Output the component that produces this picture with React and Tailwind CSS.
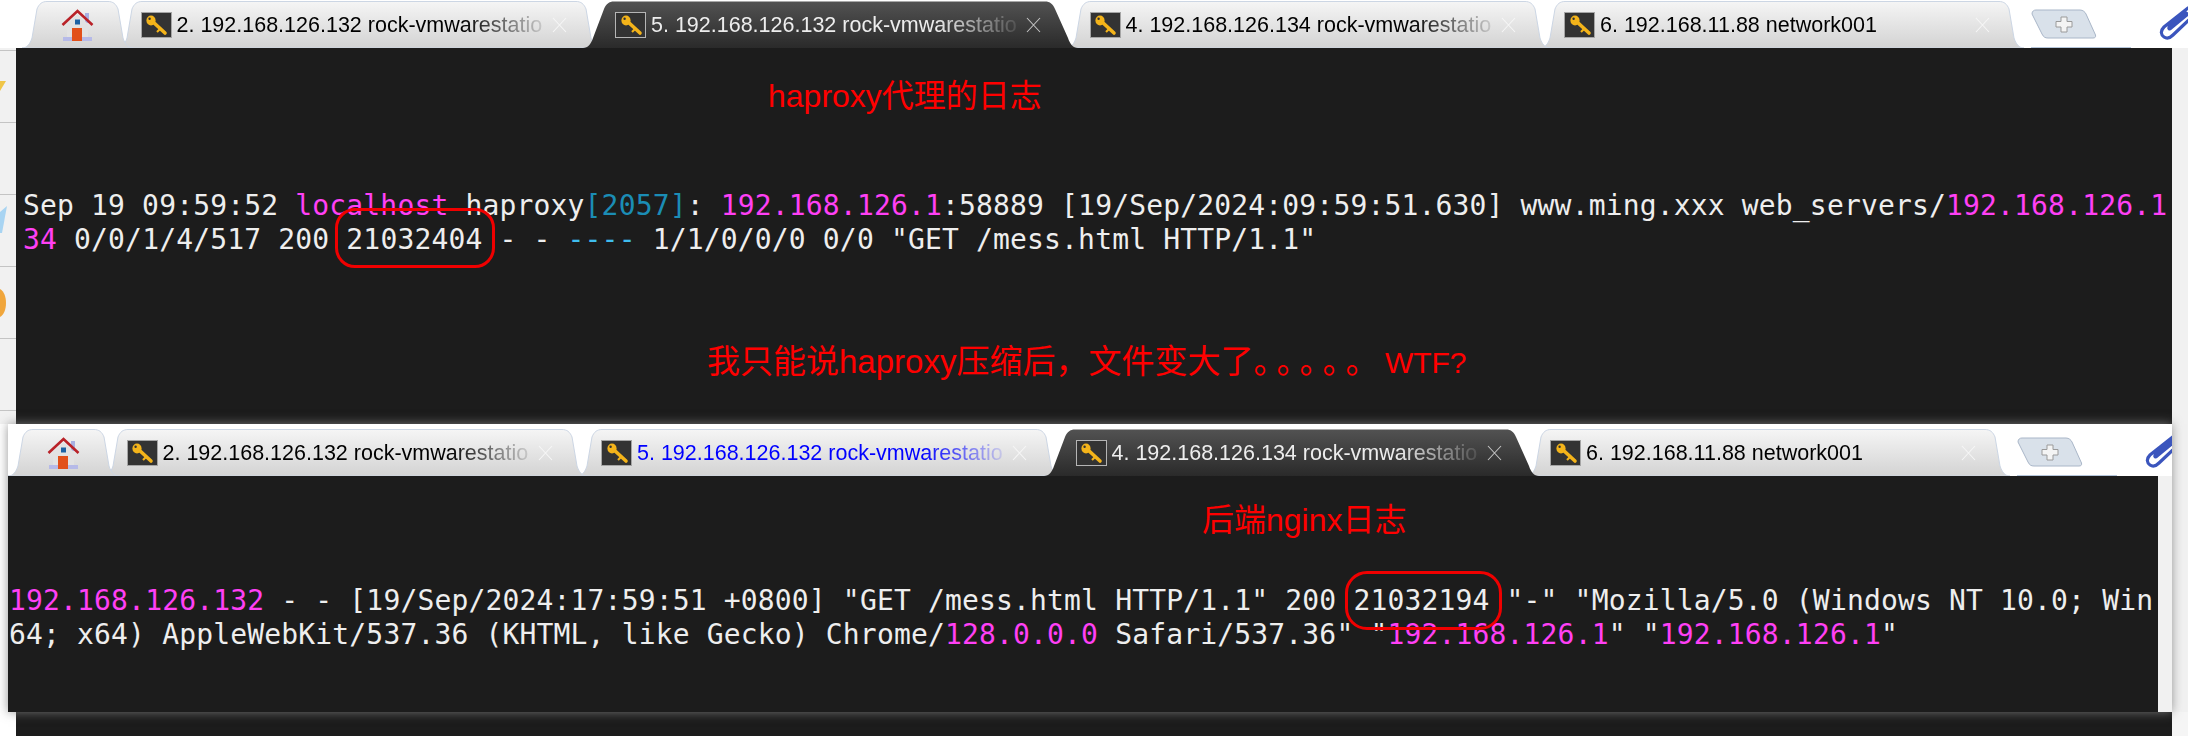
import React from "react";

const M = ({ children }) => <span className="text-[#ff40f5]">{children}</span>;

function tabPath(W, H, inL, inR) {
  return `M0 ${H} C5 ${H} 8 ${H - 4} 10 ${H - 10} L${inL - 3} 8 C${inL - 1} 3 ${inL + 2} 0.5 ${inL + 7} 0.5 L${W - inR - 7} 0.5 C${W - inR - 2} 0.5 ${W - inR + 1} 3 ${W - inR + 3} 8 L${W - 10} ${H - 10} C${W - 8} ${H - 4} ${W - 5} ${H} ${W} ${H} Z`;
}

function TabShape({ W, dark, extraL = 0, extraR = 0 }) {
  const full = W + extraL + extraR;
  return (
    <svg
      width={full}
      height={47}
      viewBox={`0 0 ${full} 47`}
      className="absolute top-0"
      style={{ left: -extraL }}
    >
      <defs>
        <linearGradient id="tab-light" x1="0" y1="0" x2="0" y2="1">
          <stop offset="0" stopColor="#f5f5f5" />
          <stop offset="1" stopColor="#d3d3d3" />
        </linearGradient>
        <linearGradient id="tab-dark" x1="0" y1="0" x2="0" y2="1">
          <stop offset="0" stopColor="#525252" />
          <stop offset="1" stopColor="#2a2a2a" />
        </linearGradient>
      </defs>
      <path
        d={tabPath(full, 47, dark ? 24 : 18, dark ? 26 : 18)}
        fill={dark ? "url(#tab-dark)" : "url(#tab-light)"}
        stroke={dark ? "none" : "#ccd6e4"}
        strokeWidth="1"
      />
    </svg>
  );
}

function KeyIcon({ dark }) {
  return (
    <div
      className={`w-[31px] h-[26px] shrink-0 bg-[#333333] border ${dark ? "border-[#b5b5b5]" : "border-[#a5a5a5]"} flex items-center justify-center`}
    >
      <svg width="24" height="22" viewBox="0 0 24 22">
        <line x1="8" y1="7" x2="21" y2="19" stroke="#f4b41a" strokeWidth="3.6" strokeLinecap="round" />
        <line x1="16" y1="15" x2="13" y2="18" stroke="#f4b41a" strokeWidth="2.2" />
        <ellipse cx="7" cy="6.5" rx="4.6" ry="5" fill="#f4b41a" />
        <circle cx="5.6" cy="4.8" r="1.2" fill="#333333" />
      </svg>
    </div>
  );
}

function CloseX({ dark }) {
  return (
    <svg width="15" height="16" viewBox="0 0 15 16" className="shrink-0 ml-[10px]">
      <path d="M1 1 L14 15 M14 1 L1 15" stroke={dark ? "#c4c4c4" : "#f6f6f6"} strokeWidth="1.1" fill="none" />
    </svg>
  );
}

function Tab({ label, dark, blue, z }) {
  const color = dark ? "text-[#ededed]" : blue ? "text-[#0000ff]" : "text-black";
  return (
    <div className={`relative w-[484px] h-[47px] shrink-0 -ml-[9.5px] ${z}`}>
      <TabShape W={484} dark={dark} extraL={dark ? 8 : 0} extraR={dark ? 3 : 0} />
      <div className="relative flex items-center h-full pl-[24px] pt-[1px]">
        <KeyIcon dark={dark} />
        <div
          className={`ml-[5px] w-[365px] overflow-hidden whitespace-pre text-[21.5px] leading-[26px] ${color} [mask-image:linear-gradient(to_right,#000_78%,rgba(0,0,0,0.12)_100%)]`}
        >
          {label}
        </div>
        <CloseX dark={dark} />
      </div>
    </div>
  );
}

function HomeTab() {
  return (
    <div className="relative w-[111px] h-[47px] shrink-0 -mr-[7px] z-[6]">
      <TabShape W={111} />
      <div className="relative flex items-center h-full pl-[39px] pt-[1px]">
        <svg width="33" height="33" viewBox="0 0 33 33">
          <rect x="24" y="4" width="4" height="10" fill="#a8b0e2" />
          <path d="M6 15 L16.5 5 L27 15 V29 H6 Z" fill="#e2e2e2" />
          <rect x="2" y="28" width="29" height="4" fill="#b6bae8" />
          <rect x="11" y="19" width="10" height="13" fill="#e2501a" />
          <rect x="14" y="10.5" width="5" height="5" fill="#1c62a4" />
          <path d="M1.5 16 L16.5 2 L31.5 16" fill="none" stroke="#b92228" strokeWidth="2.6" />
        </svg>
      </div>
    </div>
  );
}

function PlusColumn() {
  return (
    <div className="flex flex-col w-[100px] h-[47px] shrink-0 ml-[7px]">
      <svg width="66" height="30" viewBox="0 0 66 30" className="mt-[8px]">
        <path
          d="M1 5 C1 2 3 1 5 1 L49 1 C52 1 54 3 55 5 L64.5 26 C65 28 64 29 62 29 L17 29 C14 29 12.500 28 11 25 Z"
          fill="#d9e1ea"
          stroke="#a9b6c8"
        />
        <path
          d="M30 8 H36 V12.500 H41 V18 H36 V23 H30 V18 H25 V12.500 H30 Z"
          fill="#f4f4f4"
          stroke="#9a9a9a"
        />
      </svg>
      <div className="mt-auto h-px bg-[#b4c5da]" />
    </div>
  );
}

function Clip() {
  return (
    <svg width="32" height="34" viewBox="0 0 32 34" className="shrink-0 ml-[28px] mt-[5px]">
      <path
        d="M29 2 L5 21 C1 25 2 29 5 31 C8 33 11 32 14 29 L33 11 M35 3 L12 22 C10 24 9 22 11 20 L27 7"
        fill="none"
        stroke="#3b55bd"
        strokeWidth="3.2"
        strokeLinecap="round"
      />
    </svg>
  );
}

function TabBar({ active, h, pt, pl }) {
  return (
    <div className={`flex overflow-hidden bg-white shrink-0 ${h} ${pt} ${pl}`}>
      <HomeTab />
      <Tab label="2. 192.168.126.132 rock-vmwarestatio" z="z-[5]" />
      <Tab
        label="5. 192.168.126.132 rock-vmwarestatio"
        dark={active === 5}
        blue={active !== 5}
        z={active === 5 ? "z-[10]" : "z-[4]"}
      />
      <Tab
        label="4. 192.168.126.134 rock-vmwarestatio"
        dark={active === 4}
        z={active === 4 ? "z-[10]" : "z-[3]"}
      />
      <Tab label="6. 192.168.11.88 network001" z="z-[2]" />
      <PlusColumn />
      <Clip />
    </div>
  );
}

function Note({ className, children }) {
  return (
    <div
      className={`text-[#ff0000] leading-[40px] whitespace-pre font-['Liberation_Sans','Noto_Sans_CJK_SC',sans-serif] ${className}`}
    >
      {children}
    </div>
  );
}

function Circled({ children, className }) {
  return (
    <span className="relative">
      {children}
      <span className={`absolute border-[3px] border-[#f00000] ${className}`} />
    </span>
  );
}

function Log({ className, children }) {
  return (
    <div
      className={`text-[#eeeeee] text-[28px] tracking-[0.16px] whitespace-pre font-['DejaVu_Sans_Mono',monospace] ${className}`}
    >
      {children}
    </div>
  );
}

function SideItem({ children }) {
  return <div className="h-[72px] border-b border-[#c4c4c4] overflow-hidden">{children}</div>;
}

function Sidebar() {
  return (
    <div className="w-[16px] shrink-0 bg-[#f1f1f1] overflow-hidden">
      <div className="h-[3px] border-b border-[#c4c4c4]" />
      <SideItem>
        <svg width="6" height="12" viewBox="0 0 6 12" className="mt-[29px]">
          <path d="M0 1 L6 1 L0 11 Z" fill="#f0c648" />
        </svg>
      </SideItem>
      <SideItem />
      <SideItem>
        <svg width="8" height="28" viewBox="0 0 8 28" className="mt-[11px]">
          <path d="M0 6 L7 0 L2 27 L0 27 Z" fill="#a8d4f2" />
        </svg>
      </SideItem>
      <SideItem>
        <svg width="7" height="32" viewBox="0 0 7 32" className="mt-[20px]">
          <path d="M0 2 C4 4 6 10 6 16 C6 22 4 28 0 30 Z" fill="#f0a63c" />
        </svg>
      </SideItem>
      <SideItem />
    </div>
  );
}

export default function App() {
  return (
    <div className="w-[2188px] h-[736px] overflow-hidden bg-white flex flex-col font-['Liberation_Sans','Noto_Sans_CJK_SC',sans-serif]">
      <TabBar active={5} h="h-[48px]" pt="pt-[1px]" pl="pl-[22px]" />

      <div className="flex h-[376px] shrink-0">
        <Sidebar />
        <div className="w-[2156px] bg-[#1c1c1c] pt-[28px]">
          <Note className="ml-[752px] text-[32px]">haproxy代理的日志</Note>
          <Log className="mt-[73px] ml-[7px] leading-[34px]">
            <div>
              {"Sep 19 09:59:52 "}
              <M>localhost</M>
              {" haproxy"}
              <span className="text-[#1b8db5]">[2057]</span>
              {": "}
              <M>192.168.126.1</M>
              {":58889 [19/Sep/2024:09:59:51.630] www.ming.xxx web_servers/"}
              <M>192.168.126.1</M>
            </div>
            <div>
              <M>34</M>
              {" 0/0/1/4/517 200 "}
              <Circled className="-left-[11px] -right-[13px] -top-[15px] -bottom-[12px] rounded-[20px]">
                21032404
              </Circled>
              {" - - "}
              <span className="text-[#3fbdee]">----</span>
              {' 1/1/0/0/0 0/0 "GET /mess.html HTTP/1.1"'}
            </div>
          </Log>
          <Note className="mt-[85px] ml-[691px] text-[33px]">
            我只能说haproxy压缩后，文件变大了
            <span className="tracking-[6.5px]">。。。。。</span>
            <span className="text-[30px]">WTF?</span>
          </Note>
        </div>
        <div className="w-[16px] bg-[#f1f1f1]" />
      </div>

      <div className="flex h-[288px] shrink-0 bg-[#f1f1f1]">
        <div className="w-[8px] shrink-0 bg-white" />
        <div className="relative z-10 w-[2164px] h-[288px] flex flex-col shadow-[0_0_10px_rgba(130,130,130,0.85)]">
          <TabBar active={4} h="h-[52px]" pt="pt-[5px]" pl="pl-0" />
          <div className="flex flex-1">
            <div className="w-[2150px] bg-[#1c1c1c] pt-[24px]">
              <Note className="ml-[1194px] text-[32px]">后端nginx日志</Note>
              <Log className="mt-[44px] ml-[1px] leading-[34px]">
                <div>
                  <M>192.168.126.132</M>
                  {' - - [19/Sep/2024:17:59:51 +0800] "GET /mess.html HTTP/1.1" 200 '}
                  <Circled className="-left-[8px] -right-[12px] -top-[13px] -bottom-[13px] rounded-[22px]">
                    21032194
                  </Circled>
                  {' "-" "Mozilla/5.0 (Windows NT 10.0; Win'}
                </div>
                <div>
                  {"64; x64) AppleWebKit/537.36 (KHTML, like Gecko) Chrome/"}
                  <M>128.0.0.0</M>
                  {' Safari/537.36" "'}
                  <M>192.168.126.1</M>
                  {'" "'}
                  <M>192.168.126.1</M>
                  {'"'}
                </div>
              </Log>
            </div>
            <div className="w-[14px] bg-[#f1f1f1]" />
          </div>
        </div>
      </div>

      <div className="flex h-[24px] shrink-0">
        <div className="w-[16px] bg-white" />
        <div className="w-[2156px] bg-[#1c1c1c]" />
        <div className="w-[16px] bg-[#f5f5f5]" />
      </div>
    </div>
  );
}
